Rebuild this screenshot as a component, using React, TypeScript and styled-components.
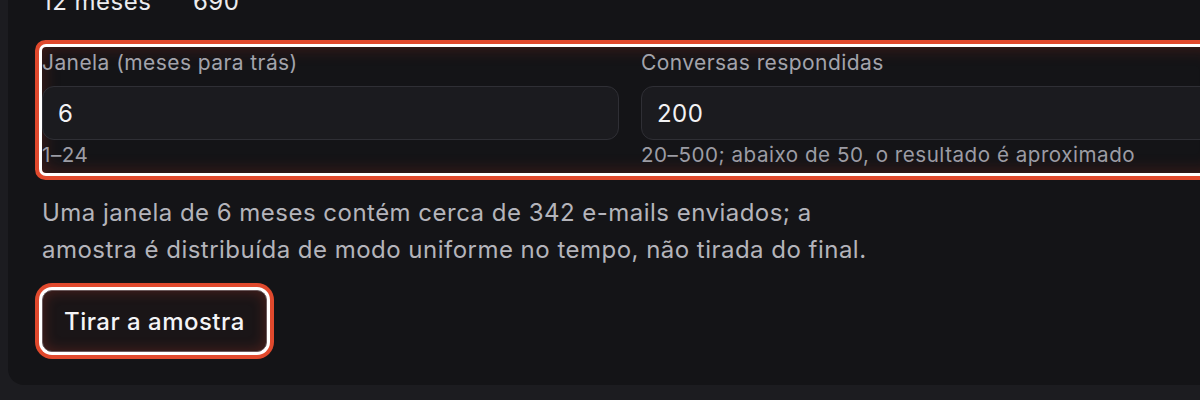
import styled, { createGlobalStyle } from "styled-components"

const GlobalStyle = createGlobalStyle`
  html, body {
    margin: 0;
    background: #1c1c20;
    overflow: hidden;
  }
  body {
    padding: 0 8px;
    font-family: Inter, "Noto Sans", sans-serif;
    color: #e6e6ea;
  }
`

const Card = styled.section`
  box-sizing: border-box;
  width: 1244px;
  margin-top: -17px;
  padding: 0 34px 33px;
  background: #141417;
  border-radius: 0 0 16px 16px;
`

const StatRow = styled.div`
  display: flex;
  font-size: 24px;
  letter-spacing: 0.02em;
  line-height: 37px;
  color: #ececef;
`

const StatCell = styled.span<{ $w?: number }>`
  width: ${p => (p.$w ? `${p.$w}px` : "auto")};
`

const FieldGroup = styled.div`
  margin-top: 27px;
  padding: 2px 0 5px;
  display: grid;
  grid-template-columns: 1fr 1fr;
  column-gap: 22px;
  border-radius: 4px;
  box-shadow:
    0 0 0 3px #ffffff,
    0 0 0 7px #e0492d,
    inset 0 0 18px rgba(190, 50, 30, 0.3);
`

const Field = styled.label`
  display: flex;
  flex-direction: column;
`

const FieldLabel = styled.span`
  font-size: 21px;
  letter-spacing: 0.02em;
  line-height: 28px;
  color: #a3a3ab;
`

const Input = styled.input`
  box-sizing: border-box;
  margin-top: 9px;
  height: 54px;
  padding: 0 15px;
  border: 1px solid #2f2f35;
  border-radius: 12px;
  background: #1b1b1f;
  color: #f2f2f4;
  font-family: inherit;
  font-size: 24px;
  letter-spacing: 0.02em;
  outline: none;
`

const Hint = styled.span`
  margin-top: 2px;
  font-size: 20.6px;
  letter-spacing: 0.025em;
  line-height: 26px;
  color: #9c9ca4;
`

const Note = styled.p`
  margin: 21px 0 0;
  max-width: 840px;
  font-size: 24px;
  letter-spacing: 0.02em;
  line-height: 37px;
  color: #b4b4bb;
`

const Button = styled.button`
  margin-top: 22px;
  height: 62px;
  padding: 0 21px;
  border: 1px solid #6b5a5c;
  border-radius: 10px;
  background: #1a1517;
  color: #f4f4f6;
  font-family: inherit;
  font-size: 24px;
  letter-spacing: 0.02em;
  font-weight: 500;
  box-shadow:
    0 0 0 3px #ffffff,
    0 0 0 7px #e0492d,
    inset 0 0 14px rgba(190, 60, 40, 0.32);
`

export default function App() {
  return (
    <>
      <GlobalStyle />
      <Card>
        <StatRow>
          <StatCell $w={151}>12 meses</StatCell>
          <StatCell>690</StatCell>
        </StatRow>
        <FieldGroup>
          <Field>
            <FieldLabel>Janela (meses para trás)</FieldLabel>
            <Input defaultValue="6" />
            <Hint>1–24</Hint>
          </Field>
          <Field>
            <FieldLabel>Conversas respondidas</FieldLabel>
            <Input defaultValue="200" />
            <Hint>20–500; abaixo de 50, o resultado é aproximado</Hint>
          </Field>
        </FieldGroup>
        <Note>
          Uma janela de 6 meses contém cerca de 342 e-mails enviados; a amostra é
          distribuída de modo uniforme no tempo, não tirada do final.
        </Note>
        <Button type="button">Tirar a amostra</Button>
      </Card>
    </>
  )
}
